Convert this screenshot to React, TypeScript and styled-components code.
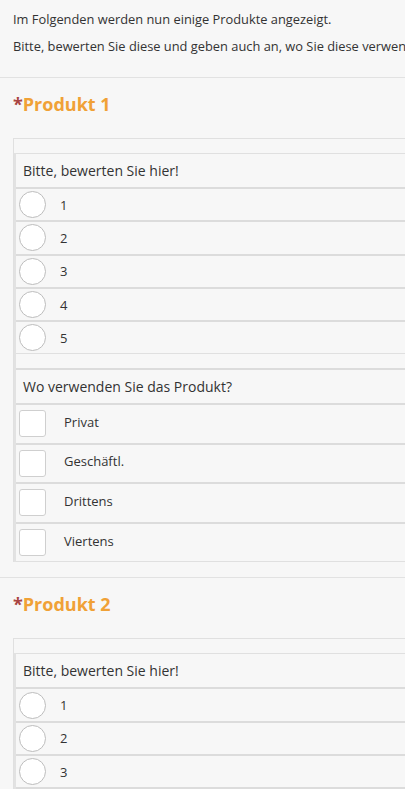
import React from "react";
import styled, { createGlobalStyle } from "styled-components";

const GlobalStyle = createGlobalStyle`
  html, body {
    margin: 0;
    padding: 0;
    background: #f7f7f7;
    overflow: hidden;
  }
  body {
    font-family: "Open Sans", "Noto Sans", sans-serif;
    color: #333;
  }
`;

const Page = styled.div`
  width: 640px;
  background: #f7f7f7;
`;

const Intro = styled.div`
  padding: 10px 13px 22px;
  border-bottom: 1px solid #e2e2e2;
`;

const IntroText = styled.p`
  margin: 0 0 9px;
  font-size: 12.85px;
  line-height: 18px;
  white-space: nowrap;
  &:last-child {
    margin-bottom: 0;
  }
`;

const Section = styled.section`
  border-bottom: 1px solid #e2e2e2;
`;

const Title = styled.h2`
  margin: 0;
  padding: 14px 13px 0;
  font-size: 18px;
  line-height: 24px;
  font-weight: 700;
  color: #f0a136;
`;

const Star = styled.span`
  color: #a94442;
`;

const Box = styled.div`
  margin: 22px 0 0 13px;
  border-top: 1px solid #e0e0e0;
  border-left: 1px solid #e0e0e0;
  padding-top: 14px;
`;

const Inner = styled.div`
  border-left: 2px solid #e2e2e2;
`;

const Group = styled.div<{ $thick?: boolean }>`
  border-top: ${(p) => (p.$thick ? "2px solid #dcdcdc" : "1px solid #e0e0e0")};
  border-bottom: 1px solid #e0e0e0;
  margin-bottom: 13.5px;
  &:last-child {
    margin-bottom: 15px;
  }
`;

const GroupHeader = styled.div`
  height: 33px;
  display: flex;
  align-items: center;
  padding-left: 7px;
  font-size: 14px;
  color: #333;
`;

const Row = styled.label<{ $tall?: boolean }>`
  display: flex;
  align-items: center;
  height: ${(p) => (p.$tall ? "37.6px" : "31.3px")};
  border-top: 2px solid #dcdcdc;
  padding-left: 3px;
  font-size: 13px;
  color: #333;
`;

const Radio = styled.span`
  width: 25px;
  height: 25px;
  border: 1px solid #bdbdbd;
  border-radius: 50%;
  background: #fff;
  flex-shrink: 0;
`;

const Check = styled.span`
  width: 25px;
  height: 25px;
  border: 1px solid #cfcfcf;
  border-radius: 3px;
  background: #fff;
  flex-shrink: 0;
`;

const RowText = styled.span<{ $gap: number; $lift?: boolean }>`
  margin-left: ${(p) => p.$gap}px;
  margin-bottom: ${(p) => (p.$lift ? "4px" : "0")};
`;

const ratings = ["1", "2", "3", "4", "5"];
const uses = ["Privat", "Geschäftl.", "Drittens", "Viertens"];

function Product({ name }: { name: string }) {
  return (
    <Section>
      <Title>
        <Star>*</Star>
        {name}
      </Title>
      <Box>
        <Inner>
          <Group>
            <GroupHeader>Bitte, bewerten Sie hier!</GroupHeader>
            {ratings.map((r) => (
              <Row key={r}>
                <Radio />
                <RowText $gap={14}>{r}</RowText>
              </Row>
            ))}
          </Group>
          <Group $thick>
            <GroupHeader>Wo verwenden Sie das Produkt?</GroupHeader>
            {uses.map((u) => (
              <Row key={u} $tall>
                <Check />
                <RowText $gap={18} $lift>{u}</RowText>
              </Row>
            ))}
          </Group>
        </Inner>
      </Box>
    </Section>
  );
}

export default function App() {
  return (
    <Page>
      <GlobalStyle />
      <Intro>
        <IntroText>Im Folgenden werden nun einige Produkte angezeigt.</IntroText>
        <IntroText>Bitte, bewerten Sie diese und geben auch an, wo Sie diese verwenden.</IntroText>
      </Intro>
      <Product name="Produkt 1" />
      <Product name="Produkt 2" />
    </Page>
  );
}
